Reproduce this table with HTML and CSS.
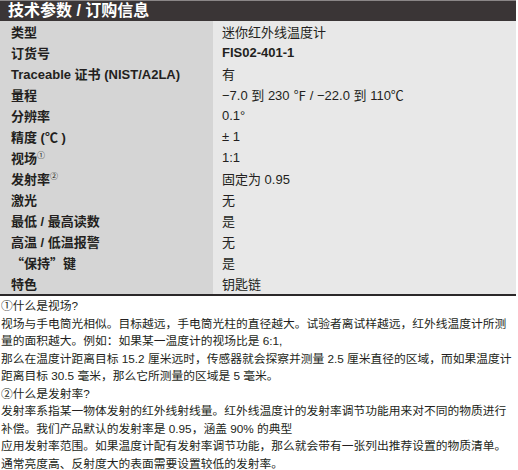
FILE: index.html
```html
<!DOCTYPE html>
<html lang="zh-CN">
<head>
    <meta charset="UTF-8">
    <meta name="viewport" content="width=device-width, initial-scale=1.0">
    <title>技术参数 / 订购信息</title>
    <link rel="stylesheet" href="styles.css">
</head>
<body>
    <div class="spec">
        <div class="spec-title">技术参数 / 订购信息</div>
        <table class="spec-table">
            <tr><th>类型</th><td>迷你红外线温度计</td></tr>
            <tr><th>订货号</th><td class="strong">FIS02-401-1</td></tr>
            <tr><th>Traceable 证书 (NIST/A2LA)</th><td>有</td></tr>
            <tr><th>量程</th><td>−7.0 到 230 ℉ / −22.0 到 110℃</td></tr>
            <tr><th>分辨率</th><td>0.1°</td></tr>
            <tr><th>精度 (℃ )</th><td>± 1</td></tr>
            <tr><th>视场<sup>①</sup></th><td>1:1</td></tr>
            <tr><th>发射率<sup>②</sup></th><td>固定为 0.95</td></tr>
            <tr><th>激光</th><td>无</td></tr>
            <tr><th>最低 / 最高读数</th><td>是</td></tr>
            <tr><th>高温 / 低温报警</th><td>无</td></tr>
            <tr><th><span class="cjk">“保持”</span>键</th><td>是</td></tr>
            <tr><th>特色</th><td>钥匙链</td></tr>
        </table>
    </div>

    <div class="notes">
        <p>①什么是视场?<br>
        视场与手电筒光相似。目标越远，手电筒光柱的直径越大。试验者离试样越远，红外线温度计所测<br>
        量的面积越大。例如：如果某一温度计的视场比是 6:1,<br>
        那么在温度计距离目标 15.2 厘米远时，传感器就会探察并测量 2.5 厘米直径的区域，而如果温度计<br>
        距离目标 30.5 毫米，那么它所测量的区域是 5 毫米。</p>
        <p>②什么是发射率?<br>
        发射率系指某一物体发射的红外线射线量。红外线温度计的发射率调节功能用来对不同的物质进行<br>
        补偿。我们产品默认的发射率是 0.95，涵盖 90% 的典型<br>
        应用发射率范围。如果温度计配有发射率调节功能，那么就会带有一张列出推荐设置的物质清单。<br>
        通常亮度高、反射度大的表面需要设置较低的发射率。</p>
    </div>
</body>
</html>
```

FILE: styles.css
```css
body {
    margin: 0;
    padding: 0;
    background: #ffffff;
    font-family: "Liberation Sans", "Noto Sans CJK SC", sans-serif;
    color: #231f20;
}
.spec {
    width: 516px;
    border-top: 1px solid #8a8687;
    border-bottom: 2px solid #2b2829;
}
.spec-title {
    background: #3a3536;
    color: #ffffff;
    font-size: 16px;
    font-weight: bold;
    height: 20px;
    line-height: 20px;
    padding-left: 8px;
}
.spec-table {
    width: 100%;
    border-collapse: collapse;
    font-size: 13px;
}
.spec-table tr {
    height: 21px;
}
.spec-table th {
    width: 202px;
    background: #d5d5d5;
    text-align: left;
    font-weight: bold;
    padding: 0 0 0 11px;
    white-space: nowrap;
}
.spec-table td {
    background: #e8e8e8;
    padding: 0 0 0 9px;
    white-space: nowrap;
}
.spec-table td.strong {
    font-weight: bold;
}
.spec-table sup {
    font-size: 8px;
    font-weight: normal;
    vertical-align: 5px;
    line-height: 0;
}
.cjk {
    font-family: "Noto Sans CJK SC", sans-serif;
}
.notes {
    padding: 1px 0 0 1px;
    font-size: 11.75px;
    line-height: 17.5px;
    white-space: nowrap;
    color: #231f20;
}
.notes p {
    margin: 0;
}
```
